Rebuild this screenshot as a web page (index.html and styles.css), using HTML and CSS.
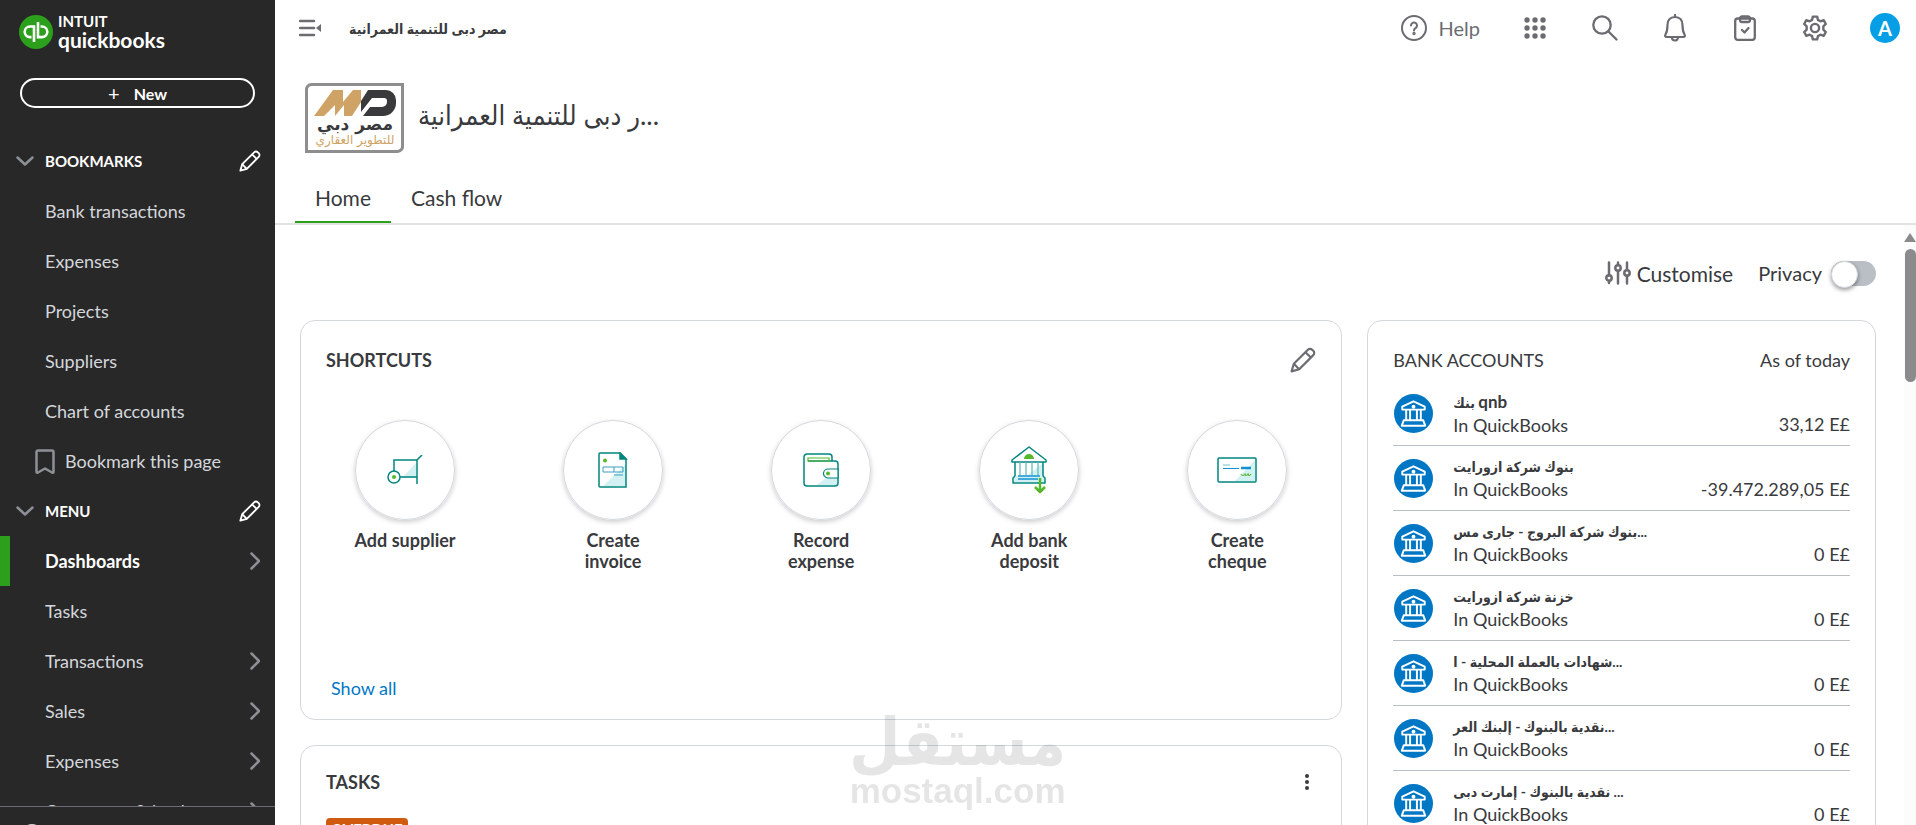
FILE: index.html
```html
<!DOCTYPE html>
<html lang="en">
<head>
  <meta charset="UTF-8">
  <title>QuickBooks</title>
  <meta name="viewport" content="width=device-width, initial-scale=1">
  <link rel="stylesheet" href="styles.css">
</head>
<body>
  <!-- shared icons -->
  <svg class="sprite" aria-hidden="true">
    <symbol id="pencil" viewBox="0 0 24 24">
      <g fill="none" stroke="currentColor" stroke-width="2" stroke-linejoin="round" stroke-linecap="round">
        <path d="M1.500 22.500L3.500 15.500 16.500 2.500a2.800 2.800 0 0 1 4 0l1 1a2.800 2.800 0 0 1 0 4L8.500 20.500z"/>
        <path d="M14.500 5l4.500 4.500M4 16l4 4"/>
      </g>
    </symbol>
    <symbol id="chevron-down" viewBox="0 0 18 10">
      <path d="M1.500 1.500L9 8.500l7.500-7" fill="none" stroke="currentColor" stroke-width="2.500" stroke-linecap="round" stroke-linejoin="round"/>
    </symbol>
    <symbol id="chevron-right" viewBox="0 0 10 18">
      <path d="M1.500 1.500L9 9l-7.500 7.500" fill="none" stroke="currentColor" stroke-width="2.500" stroke-linecap="round" stroke-linejoin="round"/>
    </symbol>
    <symbol id="bank" viewBox="0 0 40 40">
      <circle cx="20" cy="20" r="20" fill="#0077c5"/>
      <g fill="none" stroke="#fff" stroke-width="2" stroke-linejoin="round">
        <path d="M20 7.500l11.500 5.500v3h-23v-3z"/>
        <circle cx="20" cy="13" r="1"/>
        <path d="M12.500 16.500v10.500M16.500 16.500v10.500M23.500 16.500v10.500M27.500 16.500v10.500"/>
        <path d="M10 27h20l2 5.500H8z"/>
      </g>
    </symbol>
  </svg>

  <aside class="sidebar">
    <a class="brand" href="#">
      <svg width="34" height="34" viewBox="0 0 34 34" aria-hidden="true">
        <circle cx="17" cy="17" r="17" fill="#2ca01c"/>
        <g fill="none" stroke="#fff" stroke-width="2.600" stroke-linecap="butt">
          <path d="M15 27V11.500h-4a5.300 5.300 0 0 0 0 10.600h1.500"/>
          <path d="M19 7v15.100h4a5.300 5.300 0 0 0 0-10.600h-1.500"/>
        </g>
      </svg>
      <span class="brand-name"><span class="intuit">INTUIT</span><span>quickbooks</span></span>
    </a>
    <button class="new-button"><span class="plus">+</span> New</button>

    <nav class="nav">
      <div class="nav-head">
        <svg class="chevron" width="18" height="10"><use href="#chevron-down"/></svg>
        <h2>BOOKMARKS</h2>
        <button class="icon-button" aria-label="Edit bookmarks"><svg width="22" height="22"><use href="#pencil"/></svg></button>
      </div>
      <a href="#">Bank transactions</a>
      <a href="#">Expenses</a>
      <a href="#">Projects</a>
      <a href="#">Suppliers</a>
      <a href="#">Chart of accounts</a>
      <a class="bookmark-page" href="#">
        <svg width="20" height="25" viewBox="0 0 20 25"><path d="M1.500 23V3a1.500 1.500 0 0 1 1.500-1.500h14A1.500 1.500 0 0 1 18.500 3v20q0 1-1.500 .5l-7-4-7 4q-1.500 .5-1.500-.5z" fill="none" stroke="#8d9096" stroke-width="2.500" stroke-linejoin="round"/></svg>
        Bookmark this page
      </a>
      <div class="nav-head">
        <svg class="chevron" width="18" height="10"><use href="#chevron-down"/></svg>
        <h2>MENU</h2>
        <button class="icon-button" aria-label="Edit menu"><svg width="22" height="22"><use href="#pencil"/></svg></button>
      </div>
      <a class="active" href="#">Dashboards <svg class="chevron" width="10" height="18"><use href="#chevron-right"/></svg></a>
      <a href="#">Tasks</a>
      <a href="#">Transactions <svg class="chevron" width="10" height="18"><use href="#chevron-right"/></svg></a>
      <a href="#">Sales <svg class="chevron" width="10" height="18"><use href="#chevron-right"/></svg></a>
      <a href="#">Expenses <svg class="chevron" width="10" height="18"><use href="#chevron-right"/></svg></a>
      <a href="#">Customers &amp; leads <svg class="chevron" width="10" height="18"><use href="#chevron-right"/></svg></a>
    </nav>
    <div class="sidebar-footer">
      <svg width="20" height="20" viewBox="0 0 20 20"><circle cx="10" cy="10" r="9" fill="none" stroke="#d4d7dc" stroke-width="2"/></svg>
    </div>
  </aside>

  <div class="main">
    <header class="topbar">
      <button class="icon-button" aria-label="Collapse menu">
        <svg width="24" height="18" viewBox="0 0 24 18"><path d="M1 2h14M1 9h14M1 16h14" stroke="currentColor" stroke-width="2.500" stroke-linecap="round"/><path d="M22 5v8l-5-4z" fill="currentColor"/></svg>
      </button>
      <span class="company" dir="rtl" lang="ar">مصر دبى للتنمية العمرانية</span>
      <div class="tools">
        <button class="help">
          <svg width="26" height="26" viewBox="0 0 26 26" fill="none" stroke="currentColor" stroke-width="2"><circle cx="13" cy="13" r="12"/><path d="M10 10.500a3 3 0 1 1 4.500 2.600q-1.500 .8-1.500 2.400" stroke-linecap="round"/><circle cx="13" cy="18.500" r=".7"/></svg>
          Help
        </button>
        <button class="tool" aria-label="Apps">
          <svg width="22" height="22" viewBox="0 0 22 22" fill="currentColor"><circle cx="3" cy="3" r="2.700"/><circle cx="11" cy="3" r="2.700"/><circle cx="19" cy="3" r="2.700"/><circle cx="3" cy="11" r="2.700"/><circle cx="11" cy="11" r="2.700"/><circle cx="19" cy="11" r="2.700"/><circle cx="3" cy="19" r="2.700"/><circle cx="11" cy="19" r="2.700"/><circle cx="19" cy="19" r="2.700"/></svg>
        </button>
        <button class="tool" aria-label="Search">
          <svg width="26" height="26" viewBox="0 0 26 26" fill="none" stroke="currentColor" stroke-width="2.300"><circle cx="10" cy="10" r="8.700"/><path d="M16.500 16.500l8 8" stroke-linecap="round"/></svg>
        </button>
        <button class="tool" aria-label="Notifications">
          <svg width="22" height="28" viewBox="0 0 22 28" fill="none" stroke="currentColor" stroke-width="2.200" stroke-linejoin="round" stroke-linecap="round"><path d="M11 1v2M11 3c-5 0-7.500 3.500-7.500 8 0 5-.5 7-2 9.500-.8 1.500-.2 2.500 1 2.500h17c1.200 0 1.800-1 1-2.500-1.500-2.500-2-4.500-2-9.500 0-4.500-2.500-8-7.500-8zM8 23.500a3 3 0 0 0 6 0"/></svg>
        </button>
        <button class="tool" aria-label="Tasks">
          <svg width="22" height="26" viewBox="0 0 22 26" fill="none" stroke="currentColor" stroke-width="2.300" stroke-linejoin="round" stroke-linecap="round"><rect x="1.200" y="3.500" width="19.600" height="21.300" rx="2.500"/><path d="M6 3.500v1.500a2 2 0 0 0 2 2h6a2 2 0 0 0 2-2V3.500a2 2 0 0 0-2-2H8a2 2 0 0 0-2 2zM8 15l2.500 2.500L14.500 13"/></svg>
        </button>
        <button class="tool" aria-label="Settings">
          <svg width="26" height="26" viewBox="0 0 24 24" fill="none" stroke="currentColor" stroke-width="2.200" stroke-linejoin="round"><circle cx="12" cy="12" r="3.800"/><path d="M10 1.500h4l.7 3 2.300 1.300 3-1 2 3.500-2.300 2.100v3.200l2.300 2.100-2 3.500-3-1-2.300 1.300-.7 3h-4l-.7-3L7 18.200l-3 1-2-3.500 2.300-2.100v-3.200L2 8.300l2-3.500 3 1 2.300-1.300z"/></svg>
        </button>
        <button class="avatar">A</button>
      </div>
    </header>

    <div class="company-head">
      <svg class="company-logo" width="99" height="70" viewBox="0 0 99 70">
        <path d="M1.500 68.500V7a5 5 0 0 1 5-5.500h91V63a5 5 0 0 1-5 5.500z" fill="#fff" stroke="#8e8e8e" stroke-width="3"/>
        <path d="M9 33L28 7h10v12L48 7h8v12L47 33H39V22L30 33V22L19 33z" fill="#cfa365"/>
        <path d="M63 7H81a10 10 0 0 1 10 10v3a13 13 0 0 1-13 13H58L65 24H77a5 5 0 0 0 5-5v-1a3 3 0 0 0-3-3H67L56 29V18z" fill="#3a3a3c"/>
        <text class="logo-dark" x="50" y="47" text-anchor="middle">مصر دبي</text>
        <text class="logo-gold" x="50" y="61" text-anchor="middle">للتطوير العقاري</text>
      </svg>
      <h1 dir="rtl" lang="ar">...ر دبى للتنمية العمرانية</h1>
    </div>

    <nav class="tabs">
      <a class="current" href="#">Home</a>
      <a href="#">Cash flow</a>
    </nav>

    <div class="scroll-area">
      <main class="content">
        <div class="options">
          <button class="customise">
            <svg width="26" height="24" viewBox="0 0 26 24" fill="none" stroke="currentColor" stroke-width="2.500" stroke-linecap="round"><path d="M4 1.500v13M4 20v2M13 1.500v2M13 10v12.500M22 1.500v7.500M22 15v7.500"/><circle cx="4" cy="17" r="2.700"/><circle cx="13" cy="7" r="2.700"/><circle cx="22" cy="12" r="2.700"/></svg>
            Customise
          </button>
          <label class="privacy">Privacy <input type="checkbox" role="switch"></label>
        </div>

        <div class="cards">
          <section class="card shortcuts">
            <div class="card-head">
              <h2>SHORTCUTS</h2>
              <button class="icon-button edit" aria-label="Edit shortcuts"><svg width="26" height="26"><use href="#pencil"/></svg></button>
            </div>
            <div class="shortcut-list">
              <a href="#">
                <span class="circle"><svg width="36" height="30" viewBox="0 0 36 30" fill="none" stroke="#00857f" stroke-width="1.500"><path d="M29 8v15H15z" fill="#d3f1f3" stroke="none"/><path d="M7 16V5h23M13 22h17M30 5v24M30 5l5-5"/><circle cx="7" cy="22" r="6" fill="#fff"/><circle cx="7" cy="22" r="2" fill="#53b92b" stroke="none"/></svg></span>
                <span class="label">Add supplier</span>
              </a>
              <a href="#">
                <span class="circle"><svg width="30" height="36" viewBox="0 0 30 36" fill="none" stroke="#00857f" stroke-width="1.500"><path d="M28 12v22H5z" fill="#d3f1f3" stroke="none"/><path d="M2 1h20l6 6v28H2a1 1 0 0 1-1-1V2a1 1 0 0 1 1-1z"/><path d="M22 1v6h6z" fill="#00857f"/><path d="M5 15h20v5H5zM16 15v5M16 23h9" stroke="#3a9fc0" stroke-width="1"/><circle cx="7" cy="8.500" r="2" fill="#53b92b" stroke="none"/></svg></span>
                <span class="label">Create<br>invoice</span>
              </a>
              <a href="#">
                <span class="circle"><svg width="36" height="34" viewBox="0 0 36 34" fill="none" stroke="#00857f" stroke-width="1.500"><path d="M34 16v16H14z" fill="#d3f1f3" stroke="none"/><path d="M29 8V4a3 3 0 0 0-3-3H4a3 3 0 0 0-3 3v26a3 3 0 0 0 3 3h28a3 3 0 0 0 3-3V11a3 3 0 0 0-3-3H5"/><path d="M5 8V5h21v3z" stroke="#53b92b" stroke-width="1.200"/><path d="M35 16h-10a4.500 4.500 0 0 0 0 9h10z" fill="#fff" stroke-width="1.200"/><circle cx="25" cy="20.500" r="2" fill="#53b92b" stroke="none"/></svg></span>
                <span class="label">Record<br>expense</span>
              </a>
              <a href="#">
                <span class="circle"><svg width="36" height="48" viewBox="0 0 36 48" fill="none" stroke="#00857f" stroke-width="1.500" stroke-linejoin="round"><path d="M32 17v14H14zM3 30h30v6H3z" fill="#d3f1f3" stroke="none"/><path d="M18 1l17 13v2H1v-2zM4 16v14M32 16v14M4 30l-2 2v5h32v-5l-2-2"/><path d="M9 16v13M15 16v13M21 16v13M27 16v13" stroke="#5bb8b5" stroke-width="1.200"/><path d="M7 30h22M7 33h20" stroke="#1192d4"/><path d="M13 13a5 5 0 0 1 10 0z" fill="#53b92b" stroke="none"/><path d="M29 32v14M24 41l5 5 5-5" stroke="#53b92b" stroke-width="2.500"/></svg></span>
                <span class="label">Add bank<br>deposit</span>
              </a>
              <a href="#">
                <span class="circle"><svg width="40" height="26" viewBox="0 0 40 26" fill="none" stroke="#00857f" stroke-width="1.500"><path d="M38 3v21H18z" fill="#d3f1f3" stroke="none"/><rect x="1" y="1" width="38" height="24" rx="1"/><path d="M6 8h7" stroke="#6fc4c2" stroke-width="1"/><path d="M6 11.500h16" stroke="#1192d4" stroke-width="1"/><path d="M24 11h10" stroke="#1192d4" stroke-width="2.500"/><path d="M24 17q2 3 4 0 1 3 3 0 1 3 3 0" stroke="#53b92b" stroke-width="1.200"/></svg></span>
                <span class="label">Create<br>cheque</span>
              </a>
            </div>
            <a class="show-all" href="#">Show all</a>
          </section>

          <section class="card accounts">
            <div class="card-head">
              <h2>BANK ACCOUNTS</h2>
              <span>As of today</span>
            </div>
            <ul>
              <li><svg width="39" height="39"><use href="#bank"/></svg><div class="account"><strong>بنك <span class="latin">qnb</span></strong><span>In QuickBooks</span></div><span class="amount">33,12 E£</span></li>
              <li><svg width="39" height="39"><use href="#bank"/></svg><div class="account"><strong>بنوك شركة ازورايت</strong><span>In QuickBooks</span></div><span class="amount">-39.472.289,05 E£</span></li>
              <li><svg width="39" height="39"><use href="#bank"/></svg><div class="account"><strong>بنوك شركة البروج - جارى مس...</strong><span>In QuickBooks</span></div><span class="amount">0 E£</span></li>
              <li><svg width="39" height="39"><use href="#bank"/></svg><div class="account"><strong>خزنة شركة ازورايت</strong><span>In QuickBooks</span></div><span class="amount">0 E£</span></li>
              <li><svg width="39" height="39"><use href="#bank"/></svg><div class="account"><strong>شهادات بالعملة المحلية - ا...</strong><span>In QuickBooks</span></div><span class="amount">0 E£</span></li>
              <li><svg width="39" height="39"><use href="#bank"/></svg><div class="account"><strong>نقدية بالبنوك - إلبنك العر...</strong><span>In QuickBooks</span></div><span class="amount">0 E£</span></li>
              <li><svg width="39" height="39"><use href="#bank"/></svg><div class="account"><strong>نقدية بالبنوك - إمارت دبى ...</strong><span>In QuickBooks</span></div><span class="amount">0 E£</span></li>
            </ul>
          </section>

          <section class="card tasks">
            <div class="card-head">
              <h2>TASKS</h2>
              <button class="icon-button kebab" aria-label="More"><svg width="4" height="16" viewBox="0 0 4 16" fill="#393a3d"><circle cx="2" cy="2" r="2"/><circle cx="2" cy="8" r="2"/><circle cx="2" cy="14" r="2"/></svg></button>
            </div>
            <span class="badge">OVERDUE</span>
          </section>
        </div>
      </main>
      <div class="scrollbar">
        <span class="arrow"></span>
        <span class="thumb"></span>
      </div>
    </div>
  </div>

  <div class="watermark">
    <span lang="ar">مستقل</span>
    <span class="domain">mostaql.com</span>
  </div>
</body>
</html>
```
FILE: styles.css
```css
* {
  box-sizing: border-box;
}

body {
  font-family: Lato, "DejaVu Sans Condensed", "DejaVu Sans", sans-serif;
  font-size: 18px;
  color: #393a3d;
  background: #fff;
  margin: 0;
  height: 100vh;
  display: flex;
  overflow: hidden;
}

a {
  color: inherit;
  text-decoration: none;
}

button {
  font: inherit;
  color: inherit;
  background: none;
  border: none;
  padding: 0;
  cursor: pointer;
}

svg {
  display: block;
  flex: none;
}

h1, h2, ul {
  margin: 0;
  padding: 0;
}

.sprite {
  position: absolute;
  width: 0;
  height: 0;
}

.icon-button {
  display: flex;
}

/* sidebar */
.sidebar {
  flex: none;
  width: 275px;
  display: flex;
  flex-direction: column;
  background: #282828;
  color: #d4d7dc;
}

.brand {
  display: flex;
  align-items: center;
  gap: 5px;
  padding: 12px 19px 0;
  height: 52px;
  color: #fff;
}

.brand-name {
  display: flex;
  flex-direction: column;
  font-size: 21px;
  font-weight: bold;
  line-height: 22px;
}

.intuit {
  font-size: 15px;
  line-height: 15px;
}

.new-button {
  flex: none;
  margin: 26px 20px 28px;
  height: 30px;
  border: 2px solid #fff;
  border-radius: 15px;
  color: #fff;
  font-size: 16px;
  font-weight: bold;
  display: flex;
  align-items: center;
  justify-content: center;
  gap: 14px;
}

.plus {
  font-size: 20px;
  font-weight: normal;
}

.nav {
  flex: 1;
  min-height: 0;
  overflow: hidden;
}

.nav a,
.nav-head {
  height: 50px;
  display: flex;
  align-items: center;
  padding: 0 15px 0 45px;
}

.nav a .chevron {
  margin-left: auto;
}

.nav-head {
  padding: 0 14px 0 16px;
  gap: 11px;
  color: #fff;
}

.nav-head h2 {
  flex: 1;
  font-size: 15px;
}

.chevron {
  color: #8d9096;
}

.nav .bookmark-page {
  padding-left: 35px;
  gap: 10px;
}

.nav .active {
  color: #fff;
  font-weight: bold;
  border-left: 10px solid #2ca01c;
  padding-left: 35px;
}

.sidebar-footer {
  flex: none;
  height: 19px;
  border-top: 1px solid #6b6c72;
  padding: 17px 22px 0;
  overflow: hidden;
}

/* header */
.main {
  flex: 1;
  min-width: 0;
  display: flex;
  flex-direction: column;
}

.topbar {
  display: flex;
  align-items: center;
  height: 56px;
  padding: 0 16px 0 24px;
  gap: 26px;
  color: #6b6c72;
}

.company {
  font-size: 14px;
  font-weight: bold;
  color: #393a3d;
}

.tools {
  margin-left: auto;
  display: flex;
  align-items: center;
}

.help {
  display: flex;
  align-items: center;
  gap: 12px;
  margin-right: 20px;
  font-size: 20px;
}

.tool {
  width: 70px;
  display: flex;
  justify-content: center;
}

.avatar {
  width: 30px;
  height: 30px;
  margin-left: 20px;
  border-radius: 50%;
  background: #069fe5;
  color: #fff;
  font-size: 20px;
  font-weight: bold;
}

.company-head {
  display: flex;
  align-items: center;
  gap: 14px;
  padding: 27px 30px 0;
}

.company-head h1 {
  font-size: 27px;
  font-weight: normal;
  line-height: 64px;
  align-self: flex-start;
}

.logo-dark,
.logo-gold {
  font-family: "DejaVu Sans", sans-serif;
  font-size: 17px;
  font-weight: bold;
  fill: #3a3a3c;
}

.logo-gold {
  font-size: 12px;
  font-weight: normal;
  fill: #cfa365;
}

.tabs {
  display: flex;
  padding: 20px 20px 0;
  border-bottom: 2px solid #e3e3e4;
  font-size: 21px;
}

.tabs a {
  height: 50px;
  line-height: 50px;
  padding: 0 20px;
  border-bottom: 2px solid transparent;
}

.tabs .current {
  border-color: #2ca01c;
}

/* content */
.scroll-area {
  flex: 1;
  min-height: 0;
  display: flex;
}

.content {
  flex: 1;
  padding: 35px 28px 0 25px;
  overflow: hidden;
}

.options {
  display: flex;
  justify-content: flex-end;
  gap: 25px;
  height: 26px;
  margin-bottom: 34px;
  font-size: 21px;
}

.customise,
.privacy {
  display: flex;
  align-items: center;
  gap: 6px;
}

.customise svg {
  color: #6b6c72;
}

.privacy {
  gap: 9px;
  font-size: 20px;
}

.privacy input {
  appearance: none;
  margin: 0;
  width: 45px;
  height: 25px;
  border-radius: 13px;
  background: #babec5;
  display: flex;
}

.privacy input::before {
  content: "";
  width: 25px;
  height: 25px;
  border: 1px solid #d4d7dc;
  border-radius: 50%;
  background: #fff;
  box-shadow: 0 2px 4px rgba(0, 0, 0, 0.4);
}

.cards {
  display: grid;
  grid-template-columns: repeat(3, 1fr);
  grid-template-rows: 400px auto;
  gap: 25px;
}

.card {
  border: 1px solid #d4d7dc;
  border-radius: 15px;
}

.card-head {
  display: flex;
  align-items: center;
  justify-content: space-between;
  padding: 0 25px;
  height: 78px;
}

.card-head h2 {
  font-size: 18px;
}

.edit {
  color: #6b6c72;
}

.shortcuts {
  grid-column: span 2;
  display: flex;
  flex-direction: column;
}

.shortcut-list {
  flex: 1;
  display: grid;
  grid-template-columns: repeat(5, 1fr);
  padding-top: 21px;
}

.shortcut-list a {
  display: flex;
  flex-direction: column;
  align-items: center;
  gap: 10px;
  font-weight: bold;
  line-height: 21px;
  text-align: center;
}

.circle {
  width: 100px;
  height: 100px;
  border: 1px solid #d4d7dc;
  border-radius: 50%;
  box-shadow: 0 2px 5px rgba(0, 0, 0, 0.2);
  display: flex;
  align-items: center;
  justify-content: center;
}

.show-all {
  color: #0077c5;
  padding: 0 30px;
  margin-bottom: 20px;
}

.accounts {
  grid-row: span 2;
}

.accounts h2 {
  font-weight: normal;
}

.accounts ul {
  list-style: none;
  margin: 0 25px;
}

.accounts .card-head {
  height: 60px;
  padding-top: 18px;
}

.accounts li {
  display: flex;
  align-items: center;
  height: 65px;
  gap: 20px;
  padding-left: 1px;
  border-bottom: 1px solid #babec5;
}

.account {
  flex: 1;
  display: flex;
  flex-direction: column;
  line-height: 23px;
}

.account strong {
  font-size: 14px;
}

.account .latin {
  font-size: 17px;
}

.amount {
  line-height: 23px;
  margin-top: 23px;
}

.tasks {
  grid-column: span 2;
  border-radius: 15px 15px 0 0;
}

.tasks .card-head {
  height: 71px;
}

.kebab {
  padding: 0 7px;
}

.badge {
  display: inline-block;
  margin-left: 25px;
  padding: 0 5px;
  border-radius: 4px;
  background: #d05a0e;
  color: #fff;
  font-size: 15px;
  font-weight: bold;
  line-height: 22px;
}

.scrollbar {
  width: 12px;
  padding-top: 8px;
  background: #fcfcfc;
}

.arrow {
  display: block;
  border: 6px solid transparent;
  border-top: 0;
  border-bottom: 9px solid #8b8b8d;
}

.thumb {
  display: block;
  height: 133px;
  margin: 7px 0 0 1px;
  border-radius: 6px;
  background: #8b8b8d;
}

.watermark {
  position: fixed;
  left: 849px;
  bottom: 16px;
  display: flex;
  flex-direction: column;
  align-items: center;
  color: #000;
  opacity: 0.1;
  font-weight: bold;
  font-size: 66px;
  line-height: 66px;
  pointer-events: none;
}

.domain {
  font-family: "Liberation Sans", sans-serif;
  font-size: 35px;
  line-height: 36px;
}
```
